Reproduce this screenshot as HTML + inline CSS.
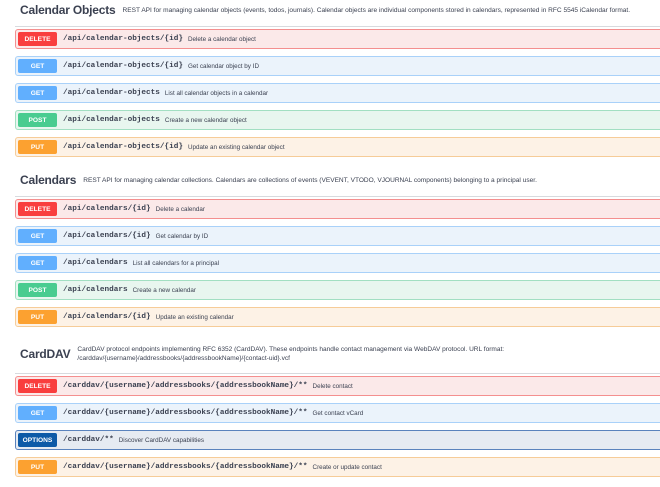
<!DOCTYPE html>
<html><head><meta charset="utf-8"><style>
*{margin:0;padding:0;box-sizing:border-box}
body{width:660px;height:487px;background:#fff;font-family:"Liberation Sans",Arial,sans-serif;position:relative;overflow:hidden;color:#3b4151}
.h{position:absolute;left:20px;display:flex;align-items:center;white-space:nowrap}
.h b{font-size:12px;font-weight:bold;color:#3b4151;margin-right:7px;letter-spacing:-0.2px}
.h span{font-size:6.55px;color:#3b4151}
.div{position:absolute;left:15px;right:0;height:1px;background:#d8dade}
.r{position:absolute;left:15px;width:660px;height:20px;border:1px solid;border-radius:3px;display:flex;align-items:center;white-space:nowrap}
.m{width:39px;height:14px;margin-left:2px;border-radius:2px;color:#fff;font-weight:bold;font-size:6.6px;display:flex;align-items:center;justify-content:center}
.p{font-family:"Liberation Mono",monospace;font-weight:bold;font-size:7.7px;color:#3b4151;margin-left:6px}
.d{font-size:6.3px;color:#3b4151;margin-left:5px}
.del{background:#fbe9e9;border-color:#f48f8f}.del .m{background:#f93e3e}
.get{background:#ebf3fb;border-color:#a9d1f9}.get .m{background:#61affe}
.post{background:#e8f6ef;border-color:#a2dfc2}.post .m{background:#49cc90}
.put{background:#fdf2e6;border-color:#f6cc98}.put .m{background:#fca130}
.opt{background:#e6ebf2;border-color:#5a83bd}.opt .m{background:#0d5aa7}
</style></head><body>
<div class="h" style="top:3px"><b>Calendar Objects</b><span>REST API for managing calendar objects (events, todos, journals). Calendar objects are individual components stored in calendars, represented in RFC 5545 iCalendar format.</span></div>
<div class="div" style="top:26px"></div>
<div class="r del" style="top:29px"><div class="m">DELETE</div><div class="p">/api/calendar-objects/{id}</div><div class="d">Delete a calendar object</div></div>
<div class="r get" style="top:56px"><div class="m">GET</div><div class="p">/api/calendar-objects/{id}</div><div class="d">Get calendar object by ID</div></div>
<div class="r get" style="top:83px"><div class="m">GET</div><div class="p">/api/calendar-objects</div><div class="d">List all calendar objects in a calendar</div></div>
<div class="r post" style="top:110px"><div class="m">POST</div><div class="p">/api/calendar-objects</div><div class="d">Create a new calendar object</div></div>
<div class="r put" style="top:137px"><div class="m">PUT</div><div class="p">/api/calendar-objects/{id}</div><div class="d">Update an existing calendar object</div></div>

<div class="h" style="top:173px"><b>Calendars</b><span>REST API for managing calendar collections. Calendars are collections of events (VEVENT, VTODO, VJOURNAL components) belonging to a principal user.</span></div>
<div class="div" style="top:196px"></div>
<div class="r del" style="top:199px"><div class="m">DELETE</div><div class="p">/api/calendars/{id}</div><div class="d">Delete a calendar</div></div>
<div class="r get" style="top:226px"><div class="m">GET</div><div class="p">/api/calendars/{id}</div><div class="d">Get calendar by ID</div></div>
<div class="r get" style="top:253px"><div class="m">GET</div><div class="p">/api/calendars</div><div class="d">List all calendars for a principal</div></div>
<div class="r post" style="top:280px"><div class="m">POST</div><div class="p">/api/calendars</div><div class="d">Create a new calendar</div></div>
<div class="r put" style="top:307px"><div class="m">PUT</div><div class="p">/api/calendars/{id}</div><div class="d">Update an existing calendar</div></div>

<div class="h" style="top:345px"><b>CardDAV</b><span style="line-height:9px">CardDAV protocol endpoints implementing RFC 6352 (CardDAV). These endpoints handle contact management via WebDAV protocol. URL format:<br>/carddav/{username}/addressbooks/{addressbookName}/{contact-uid}.vcf</span></div>
<div class="div" style="top:373px"></div>
<div class="r del" style="top:376px"><div class="m">DELETE</div><div class="p">/carddav/{username}/addressbooks/{addressbookName}/**</div><div class="d">Delete contact</div></div>
<div class="r get" style="top:403px"><div class="m">GET</div><div class="p">/carddav/{username}/addressbooks/{addressbookName}/**</div><div class="d">Get contact vCard</div></div>
<div class="r opt" style="top:430px"><div class="m">OPTIONS</div><div class="p">/carddav/**</div><div class="d">Discover CardDAV capabilities</div></div>
<div class="r put" style="top:457px"><div class="m">PUT</div><div class="p">/carddav/{username}/addressbooks/{addressbookName}/**</div><div class="d">Create or update contact</div></div>
</body></html>
